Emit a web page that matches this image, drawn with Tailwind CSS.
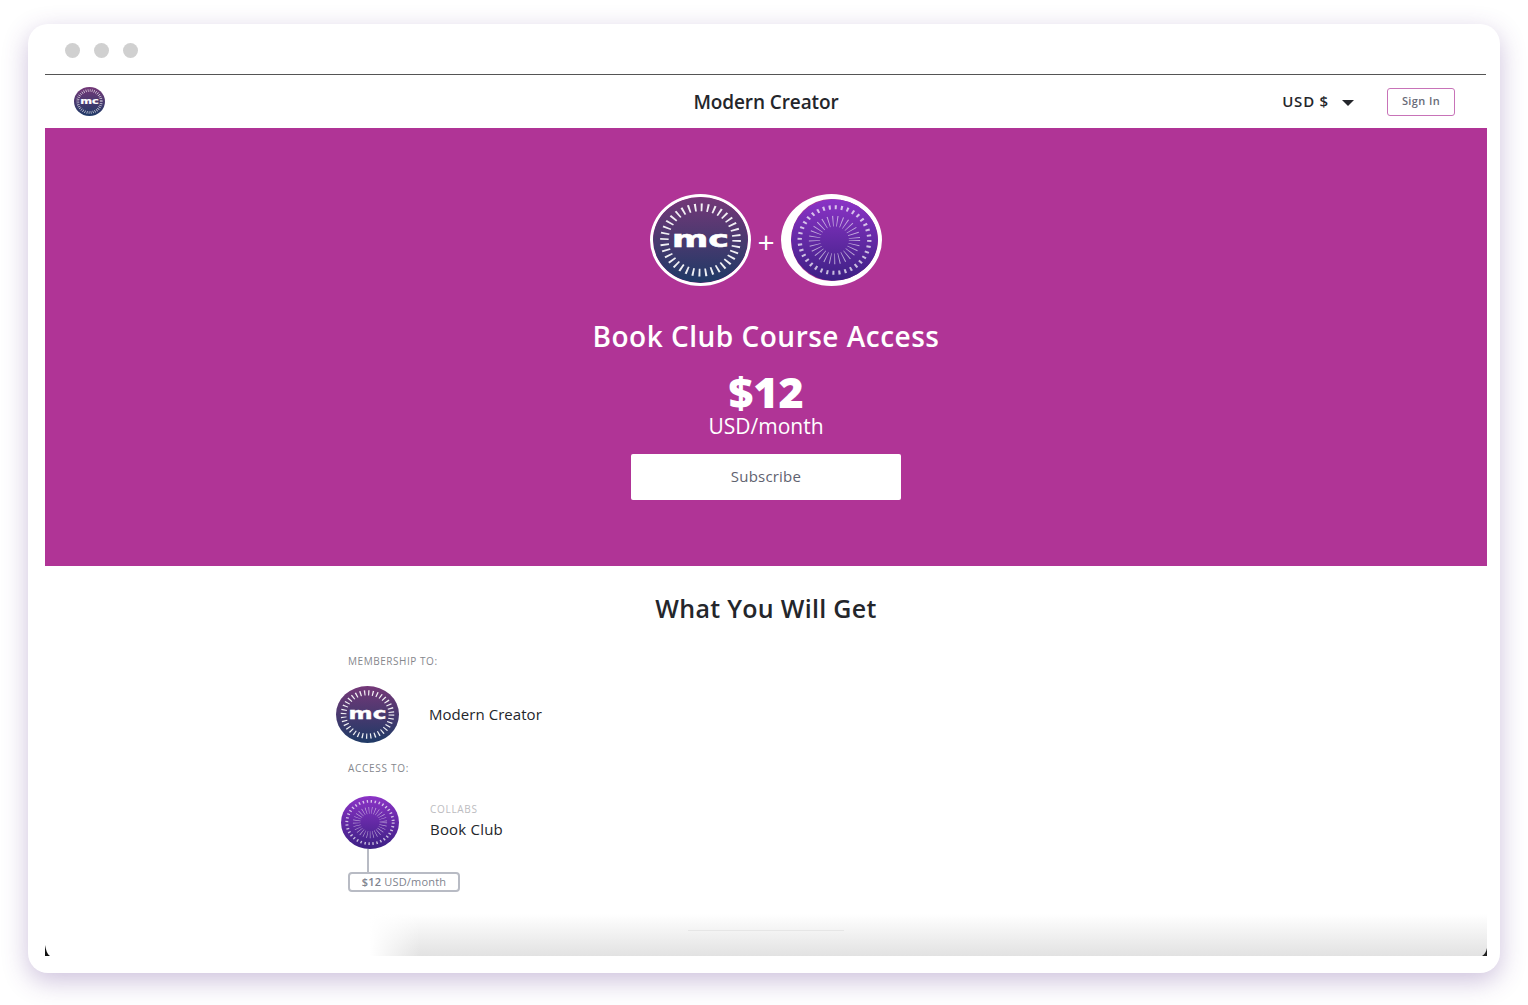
<!DOCTYPE html>
<html lang="en">
<head>
    <meta charset="UTF-8">
    <meta name="viewport" content="width=device-width, initial-scale=1.0">
    <title>Book Club Course Access - Modern Creator</title>
    <script src="https://cdn.jsdelivr.net/npm/@tailwindcss/browser@4"></script>
</head>
<body class="bg-white h-[1005px] overflow-hidden pt-[24px] pl-[28px] font-['Open_Sans','Noto_Sans',sans-serif] text-[#24262b]">
    <!-- logo shapes, reused at each size -->
    <svg class="absolute w-0 h-0" aria-hidden="true">
        <defs>
            <linearGradient id="mc-fill" x1="0" y1="0" x2="0" y2="1">
                <stop offset="0" stop-color="#743878"/>
                <stop offset="1" stop-color="#1f3a66"/>
            </linearGradient>
            <linearGradient id="collab-fill" x1="0" y1="0" x2="0" y2="1">
                <stop offset="0" stop-color="#8b33c6"/>
                <stop offset="1" stop-color="#3c2084"/>
            </linearGradient>
            <symbol id="mc-logo" viewBox="0 0 100 100" preserveAspectRatio="none">
                <circle cx="50" cy="50" r="50" fill="url(#mc-fill)"/>
                <circle cx="50" cy="50" r="38" fill="none" stroke="#fff" stroke-width="9" stroke-dasharray="2 4.63" opacity=".92"/>
                <text x="50" y="58" text-anchor="middle" textLength="60" lengthAdjust="spacingAndGlyphs" font-family="DejaVu Sans" font-weight="700" font-size="27" fill="#fff" stroke="#fff" stroke-width=".7">mc</text>
            </symbol>
            <symbol id="collab-logo" viewBox="0 0 100 100" preserveAspectRatio="none">
                <circle cx="50" cy="50" r="50" fill="url(#collab-fill)"/>
                <circle cx="50" cy="50" r="40" fill="none" stroke="#fff" stroke-width="5" stroke-dasharray="2.4 4.58" opacity=".7"/>
                <circle cx="50" cy="50" r="23" fill="none" stroke="#fff" stroke-width="13" stroke-dasharray="1 4.02" opacity=".6"/>
            </symbol>
        </defs>
    </svg>

    <div class="relative w-[1472px] h-[949px] bg-white rounded-[20px] pl-[17px] pr-[13px] shadow-[0_8px_26px_rgba(90,50,140,0.3)]">
        <!-- browser chrome -->
        <div class="h-[51px] flex items-end pl-[20px] border-b border-[#555] mr-[1px]">
            <div class="flex gap-[14px] mb-[16px]">
                <span class="block w-[15px] h-[15px] rounded-full bg-[#d0d0d0]"></span>
                <span class="block w-[15px] h-[15px] rounded-full bg-[#d0d0d0]"></span>
                <span class="block w-[15px] h-[15px] rounded-full bg-[#d0d0d0]"></span>
            </div>
        </div>

        <!-- nav -->
        <header class="h-[53px] grid grid-cols-[1fr_auto_1fr] items-center px-[32px]">
            <svg class="w-[31px] h-[29px] ml-[-3px]"><use href="#mc-logo"/></svg>
            <div class="text-[19px] font-semibold tracking-[-0.1px] mt-[1px]">Modern Creator</div>
            <div class="flex items-center justify-end">
                <span class="text-[15px] font-semibold tracking-[0.8px]">USD $</span>
                <span class="ml-[13px] mr-[33px] mt-[2px] w-0 h-0 border-x-[6px] border-x-transparent border-t-[6px] border-t-[#24262b]"></span>
                <button class="w-[68px] h-[28px] border border-[#c873b8] rounded-[3px] text-[11px] font-semibold tracking-[0.4px] text-[#686b78]">Sign In</button>
            </div>
        </header>

        <!-- hero -->
        <section class="h-[438px] bg-[#b03496] flex flex-col items-center text-white">
            <div class="flex items-center mt-[66px] h-[92px]">
                <div class="w-[101px] h-[92px] rounded-[50%] border-[3px] border-white overflow-hidden">
                    <svg class="w-full h-full"><use href="#mc-logo"/></svg>
                </div>
                <span class="w-[30px] text-center text-[30px] leading-none mt-[3px]">+</span>
                <div class="w-[101px] h-[92px] rounded-[50%] border-y-[5px] border-l-[10px] border-r-[4px] border-white overflow-hidden">
                    <svg class="w-full h-full"><use href="#collab-logo"/></svg>
                </div>
            </div>
            <h1 class="mt-[29px] text-[28px] leading-[42px] font-semibold tracking-[0.5px]">Book Club Course Access</h1>
            <div class="mt-[12px] text-[43px] leading-[45px] font-extrabold">$12</div>
            <div class="text-[21px] leading-[24px]">USD/month</div>
            <button class="mt-[16px] w-[270px] h-[46px] bg-white rounded-[2px] text-[15px] tracking-[0.2px] text-[#5f6270] pb-[2px]">Subscribe</button>
        </section>

        <!-- what you will get -->
        <section class="relative h-[390px]">
            <h2 class="pt-[24px] pb-[1px] text-center text-[25px] leading-[36px] font-semibold tracking-[0.3px]">What You Will Get</h2>
            <div class="pl-[291px]">
                <div class="mt-[27px] pl-[12px] text-[10px] leading-[14px] tracking-[0.55px] text-[#85878d]">MEMBERSHIP TO:</div>
                <div class="mt-[18px] flex items-center">
                    <svg class="w-[63px] h-[57px]"><use href="#mc-logo"/></svg>
                    <span class="ml-[30px] text-[15px] tracking-[0.05px]">Modern Creator</span>
                </div>
                <div class="mt-[18px] pl-[12px] text-[10px] leading-[14px] tracking-[0.7px] text-[#85878d]">ACCESS TO:</div>
                <div class="mt-[21px] flex pl-[5px]">
                    <svg class="w-[58px] h-[53px]"><use href="#collab-logo"/></svg>
                    <div class="ml-[31px] pt-[6px]">
                        <div class="text-[10px] leading-[14px] tracking-[0.7px] text-[#bcbcc0]">COLLABS</div>
                        <div class="mt-[2px] text-[15px] leading-[22px] tracking-[0.2px]">Book Club</div>
                    </div>
                </div>
                <div class="ml-[31px] w-[2px] h-[23px] bg-[#b8bbc4]"></div>
                <div class="ml-[12px] w-[112px] h-[20px] border-2 border-[#b8bbc4] rounded-[4px] flex items-center justify-center text-[11px] tracking-[0.2px] text-[#80838e]">
                    <b class="font-semibold">$12</b>&nbsp;USD/month
                </div>
            </div>

            <!-- scroll fade at the bottom of the window -->
            <div class="absolute left-[325px] right-0 bottom-0 h-[42px] bg-[linear-gradient(to_right,white,transparent_50px),linear-gradient(to_bottom,transparent,#e2e2e2)]"></div>
            <div class="absolute left-[643px] bottom-[25px] w-[156px] h-px bg-[#e6e6e6]"></div>
            <svg class="absolute left-0 bottom-0 w-[5px] h-[11px]" viewBox="0 0 5 11"><path d="M0 0 C1 5 2 9 5 11 L0 11 Z" fill="#111"/></svg>
            <svg class="absolute right-0 bottom-0 w-[5px] h-[8px]" viewBox="0 0 5 8"><path d="M5 0 C4 4 3 6 0 8 L5 8 Z" fill="#222"/></svg>
        </section>
    </div>
</body>
</html>
